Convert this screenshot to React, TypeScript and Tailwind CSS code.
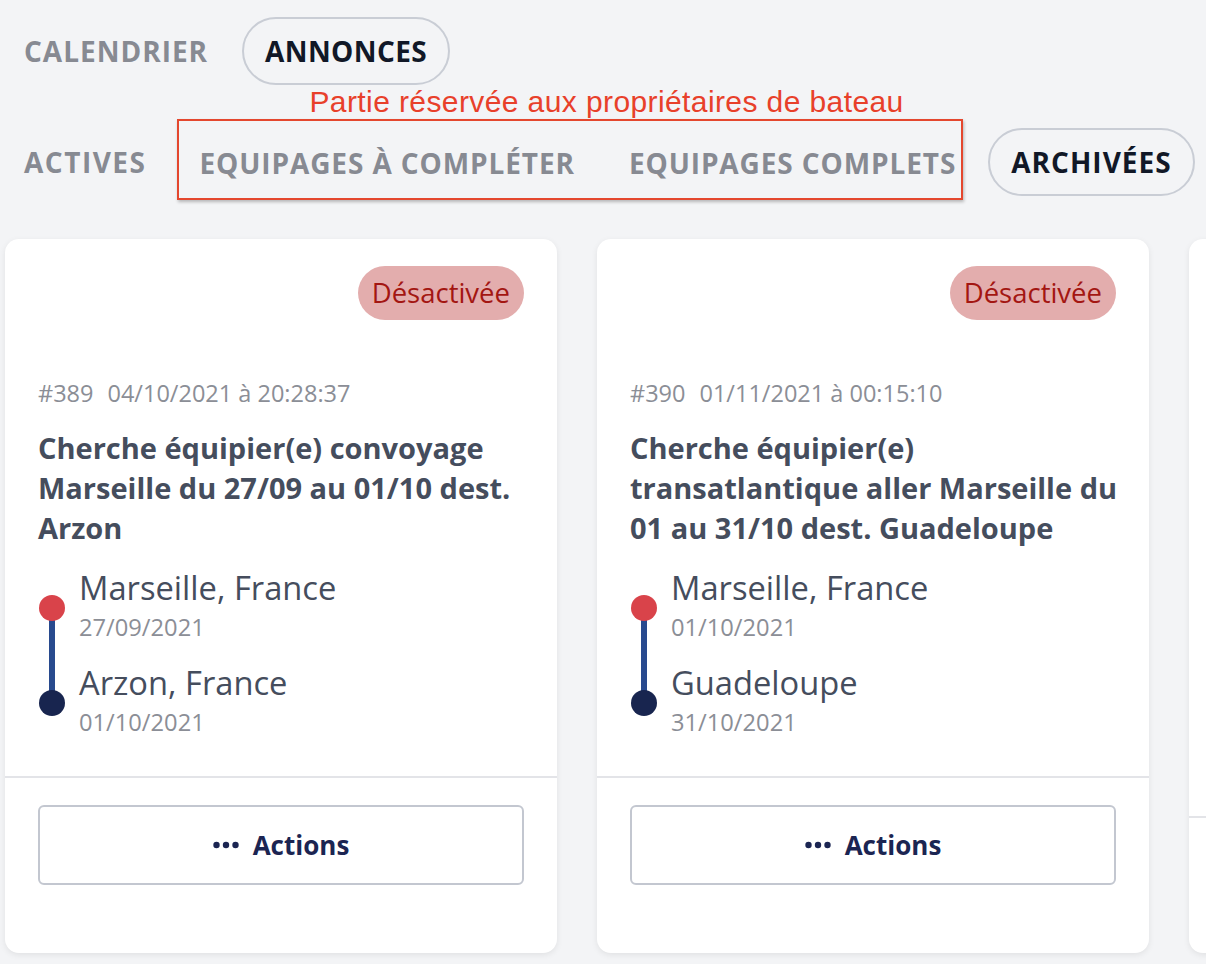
import type { ReactNode } from "react";

type Annonce = {
  id: number;
  createdAt: string;
  title: string[];
  from: string;
  fromDate: string;
  to: string;
  toDate: string;
};

const ANNONCES: Annonce[] = [
  {
    id: 389,
    createdAt: "04/10/2021 à 20:28:37",
    title: ["Cherche équipier(e) convoyage", "Marseille du 27/09 au 01/10 dest.", "Arzon"],
    from: "Marseille, France",
    fromDate: "27/09/2021",
    to: "Arzon, France",
    toDate: "01/10/2021",
  },
  {
    id: 390,
    createdAt: "01/11/2021 à 00:15:10",
    title: ["Cherche équipier(e)", "transatlantique aller Marseille du", "01 au 31/10 dest. Guadeloupe"],
    from: "Marseille, France",
    fromDate: "01/10/2021",
    to: "Guadeloupe",
    toDate: "31/10/2021",
  },
  {
    id: 391,
    createdAt: "02/11/2021 à 10:02:44",
    title: ["Cherche équipier(e)", "transatlantique retour", "Guadeloupe du 01 au 30/11", "dest. Marseille"],
    from: "Guadeloupe",
    fromDate: "01/11/2021",
    to: "Marseille, France",
    toDate: "30/11/2021",
  },
];

function Tab({ children, active, className = "" }: { children: ReactNode; active?: boolean; className?: string }) {
  return (
    <div
      className={`flex h-[68px] shrink-0 items-center rounded-full border-2 px-[21px] text-[28px] font-bold uppercase whitespace-nowrap ${
        active ? "border-[#c9cdd5] text-[#111827]" : "border-transparent text-[#878a92]"
      } ${className}`}
    >
      {children}
    </div>
  );
}

function Card({ a }: { a: Annonce }) {
  return (
    <div className="flex w-[552px] shrink-0 flex-col rounded-[14px] bg-white shadow-[0_2px_6px_rgba(0,0,0,0.08)]">
      <div className="px-[33px] pt-[27px] pb-[42px]">
        <div className="flex justify-end">
          <span className="flex h-[54px] items-center rounded-full bg-[#e3adad] px-[14px] text-[27.5px] text-[#a31612]">
            Désactivée
          </span>
        </div>

        <div className="mt-[61px] flex text-[23.5px] leading-[24px] text-[#8b8e96]">
          <span>#{a.id}</span>
          <span className="ml-[14px]">{a.createdAt}</span>
        </div>

        <h2 className="mt-[23px] text-[29px] leading-[40px] font-bold text-[#454d5d]">
          {a.title.map((line) => (
            <span key={line} className="block whitespace-nowrap">
              {line}
            </span>
          ))}
        </h2>

        {/* trajet départ -> arrivée */}
        <div className="relative mt-[20px]">
          <div className="absolute top-[40px] left-[11px] h-[94px] w-[6px] bg-[#284a8e]" />
          <div className="flex items-center gap-[14px]">
            <span className="relative mt-[9px] ml-px h-[26px] w-[26px] shrink-0 rounded-full bg-[#d9434a]" />
            <div>
              <div className="text-[32.7px] leading-[40px] whitespace-nowrap text-[#454d5d]">{a.from}</div>
              <div className="mt-[7px] text-[23.7px] leading-[24px] text-[#8b8e96]">{a.fromDate}</div>
            </div>
          </div>
          <div className="mt-[24px] flex items-center gap-[14px]">
            <span className="relative mt-[9px] ml-px h-[26px] w-[26px] shrink-0 rounded-full bg-[#18254f]" />
            <div>
              <div className="text-[32.7px] leading-[40px] whitespace-nowrap text-[#454d5d]">{a.to}</div>
              <div className="mt-[7px] text-[23.7px] leading-[24px] text-[#8b8e96]">{a.toDate}</div>
            </div>
          </div>
        </div>
      </div>

      <div className="flex-1 border-t-2 border-[#e3e4e8] px-[33px] pt-[27px] pb-[28px]">
        <button className="flex h-[80px] w-full items-center justify-center gap-[14px] rounded-[6px] border-2 border-[#c3c7d0] text-[26px] font-bold text-[#1b2552]">
          <svg width="26" height="8" viewBox="0 0 26 8" fill="currentColor">
            <circle cx="3.5" cy="4" r="3.2" />
            <circle cx="13" cy="4" r="3.2" />
            <circle cx="22.5" cy="4" r="3.2" />
          </svg>
          Actions
        </button>
      </div>
    </div>
  );
}

export default function App() {
  return (
    <div className="h-[964px] w-[1206px] overflow-hidden bg-[#f3f4f6] font-['Open_Sans',sans-serif]">
      <div className="flex items-center pt-[17px] pl-px">
        <Tab className="tracking-[1px]">Calendrier</Tab>
        <Tab active className="ml-[11px] tracking-[0.4px]">
          Annonces
        </Tab>
      </div>

      <div className="flex items-start pl-px">
        <Tab className="mt-[43px] tracking-[1.5px]">Actives</Tab>
        <div className="ml-[8px] flex flex-col">
          <p className="h-[34px] pl-[132px] font-['Liberation_Sans',Arial,sans-serif] text-[30px] leading-[34px] tracking-[0.4px] whitespace-nowrap text-[#e8402a]">
            Partie réservée aux propriétaires de bateau
          </p>
          <div className="flex h-[81px] items-center gap-[54px] border-2 border-[#e4472e] pt-[6px] pr-[5px] pl-[20px] text-[28px] font-bold tracking-[0.9px] whitespace-nowrap text-[#878a92] uppercase shadow-[1px_2px_3px_rgba(0,0,0,0.25)]">
            <span>Equipages à compléter</span>
            <span>Equipages complets</span>
          </div>
        </div>
        <Tab active className="mt-[43px] ml-[25px] tracking-[1px]">
          Archivées
        </Tab>
      </div>

      <div className="mt-[39px] flex items-stretch gap-[40px] pl-[5px]">
        {ANNONCES.map((a) => (
          <Card key={a.id} a={a} />
        ))}
      </div>
    </div>
  );
}
